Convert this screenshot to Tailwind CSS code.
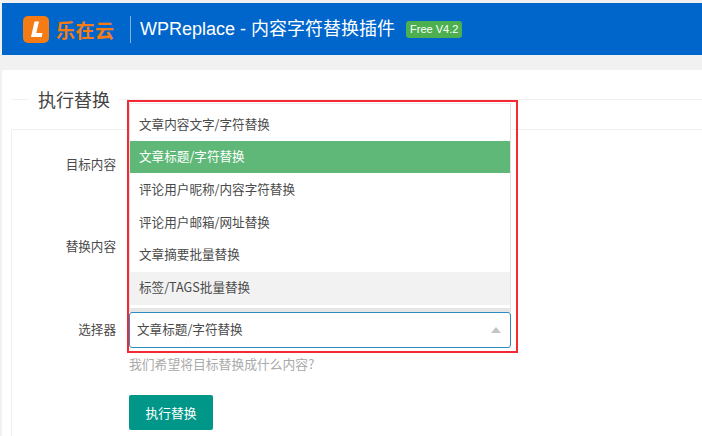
<!DOCTYPE html>
<html lang="zh"><head><meta charset="utf-8">
<script src="https://cdn.jsdelivr.net/npm/@tailwindcss/browser@4"></script>
</head>
<body class="m-0 bg-[#f1f1f1]">
<div class="relative h-[436px] w-[702px] overflow-hidden pl-[2px] pt-[3px] font-['Noto_Sans_CJK_SC',sans-serif] text-[#4a4a4a]">
  <header class="flex h-[52px] items-center bg-[#0066cc] pl-[21px]">
    <svg width="26" height="27" viewBox="0 0 26 27" class="shrink-0"><rect width="26" height="27" rx="5" fill="#f57c14"/><path d="M11.5 5.5h4.5l-2.7 11.5h6.2l-.9 4h-10.6z" fill="#fff"/></svg>
    <span class="ml-[7px] w-[60px] whitespace-nowrap text-[19px] font-bold leading-none tracking-[0.5px] text-[#f57c14]">乐在云</span>
    <span class="ml-[14px] h-[27px] w-px bg-white/50"></span>
    <h1 class="ml-[9px] whitespace-nowrap font-['Liberation_Sans','Noto_Sans_CJK_SC',sans-serif] text-[18px] font-normal text-white">WPReplace - 内容字符替换插件</h1>
    <span class="ml-[11px] mt-[1px] whitespace-nowrap rounded-[3px] bg-[#4caf50] px-[4px] py-px font-['Liberation_Sans',sans-serif] text-[11px] leading-[15px] text-white">Free V4.2</span>
  </header>

  <main class="mt-[15px] h-[366px] bg-white pl-[9px] pt-[19px]">
    <div class="flex items-center">
      <span class="h-px w-[18px] bg-[#f1f1f1]"></span>
      <h2 class="ml-[9px] text-[18px] font-normal leading-[20px] text-[#444]">执行替换</h2>
      <span class="ml-[8px] h-px flex-1 bg-[#f1f1f1]"></span>
    </div>
    <section class="mt-[20px] h-[308px] border-l border-t border-[#f1f1f1] pt-[18px] text-[12.6px]">
      <div class="flex h-[35px] items-center"><label class="w-[104px] pb-[2px] text-right">目标内容</label></div>
      <div class="mt-[47px] flex h-[35px] items-center"><label class="w-[104px] pb-[2px] text-right">替换内容</label></div>
      <div class="mt-[47px] flex items-center">
        <label class="w-[104px] pb-[2px] text-right">选择器</label>
        <div class="relative ml-[13px] flex h-[36px] w-[382px] items-center rounded-[3px] border border-[#2d8bc0] bg-white pb-px pl-[7px]">
          文章标题/字符替换
          <span class="absolute right-[9px] top-[14px] h-0 w-0 border-x-[5px] border-b-[6px] border-x-transparent border-b-[#c4c4c4]"></span>
        </div>
      </div>
      <p class="ml-[117px] mt-[7px] text-[12.8px] leading-[18px] text-[#aaa]">我们希望将目标替换成什么内容?</p>
      <button class="ml-[117px] mt-[22px] block h-[35px] w-[84px] rounded-[2px] bg-[#009688] text-[12.8px] text-white">执行替换</button>
    </section>
  </main>

  <div class="absolute left-[129px] top-[103px] h-[209px] w-[382px] border-x border-b-[4px] border-t border-x-[#e2e2e2] border-b-[#e6e6e6] border-t-[#eeeeee] bg-white pt-[4px] text-[12.6px]">
    <ul>
      <li class="flex h-[33px] items-center pb-[1px] pl-[9px]">文章内容文字/字符替换</li>
      <li class="flex h-[32px] items-center bg-[#5fb878] pb-[1px] pl-[9px] text-white">文章标题/字符替换</li>
      <li class="flex h-[33px] items-center pb-[1px] pl-[9px]">评论用户昵称/内容字符替换</li>
      <li class="flex h-[33px] items-center pb-[1px] pl-[9px]">评论用户邮箱/网址替换</li>
      <li class="flex h-[33px] items-center pb-[2px] pl-[9px]">文章摘要批量替换</li>
      <li class="flex h-[33px] items-center bg-[#f2f2f2] pb-[2px] pl-[9px]">标签/TAGS批量替换</li>
    </ul>
  </div>
  <div class="pointer-events-none absolute left-[127px] top-[100px] h-[253px] w-[391px] border-2 border-[#f32a35]"></div>
</div>
</body></html>
